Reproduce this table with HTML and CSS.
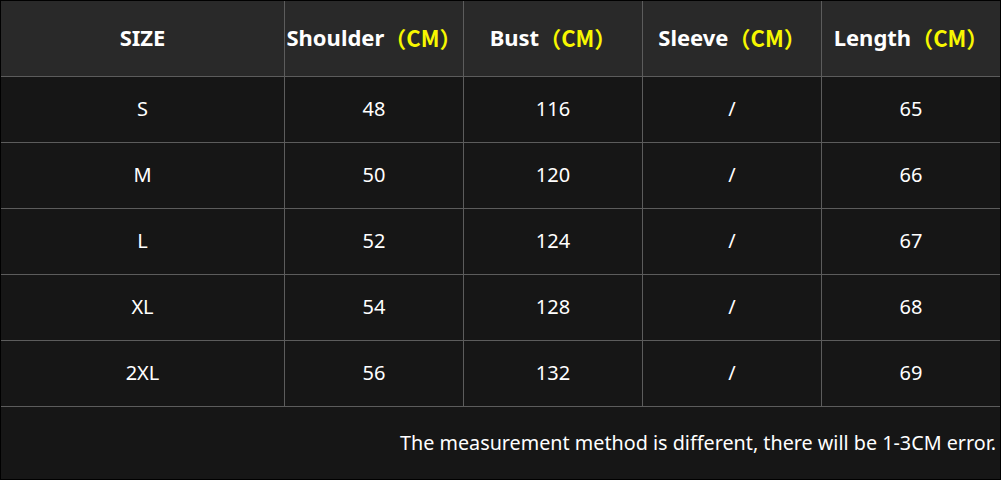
FILE: index.html
```html
<!DOCTYPE html>
<html>
<head>
<meta charset="utf-8">
<link rel="stylesheet" href="styles.css">
</head>
<body>
<div class="table">
  <div class="cell head">SIZE</div>
  <div class="cell head">Shoulder<span class="unit">（CM）</span></div>
  <div class="cell head">Bust<span class="unit">（CM）</span></div>
  <div class="cell head">Sleeve<span class="unit">（CM）</span></div>
  <div class="cell head">Length<span class="unit">（CM）</span></div>

  <div class="cell">S</div><div class="cell">48</div><div class="cell">116</div><div class="cell">/</div><div class="cell">65</div>
  <div class="cell">M</div><div class="cell">50</div><div class="cell">120</div><div class="cell">/</div><div class="cell">66</div>
  <div class="cell">L</div><div class="cell">52</div><div class="cell">124</div><div class="cell">/</div><div class="cell">67</div>
  <div class="cell">XL</div><div class="cell">54</div><div class="cell">128</div><div class="cell">/</div><div class="cell">68</div>
  <div class="cell">2XL</div><div class="cell">56</div><div class="cell">132</div><div class="cell">/</div><div class="cell">69</div>

  <div class="cell note">The measurement method is different, there will be 1-3CM error.</div>
</div>
</body>
</html>
```
FILE: styles.css
```css
* { box-sizing: border-box; }
html, body { margin: 0; padding: 0; background: #000; }
.table {
  width: 1001px;
  height: 480px;
  border: 1px solid #000;
  display: grid;
  grid-template-columns: 283px 178px 178px 178px 178px;
  grid-template-rows: 75px repeat(5, 65px) 72px;
  gap: 1px;
  background: #5c5c5c;
  font-family: "Noto Sans", "Noto Sans CJK SC", sans-serif;
  color: #fff;
}
.cell {
  background: #161616;
  display: flex;
  align-items: center;
  justify-content: center;
  font-size: 20px;
  padding-bottom: 3px;
}
.head {
  background: #292929;
  font-weight: bold;
  font-size: 22px;
  padding-bottom: 4px;
}
.unit {
  color: #f7f700;
  font-family: "Noto Sans CJK SC", sans-serif;
  font-weight: bold;
}
.note {
  grid-column: 1 / -1;
  justify-content: flex-end;
  padding-right: 4px;
  padding-bottom: 1px;
  font-size: 19.75px;
}
```
